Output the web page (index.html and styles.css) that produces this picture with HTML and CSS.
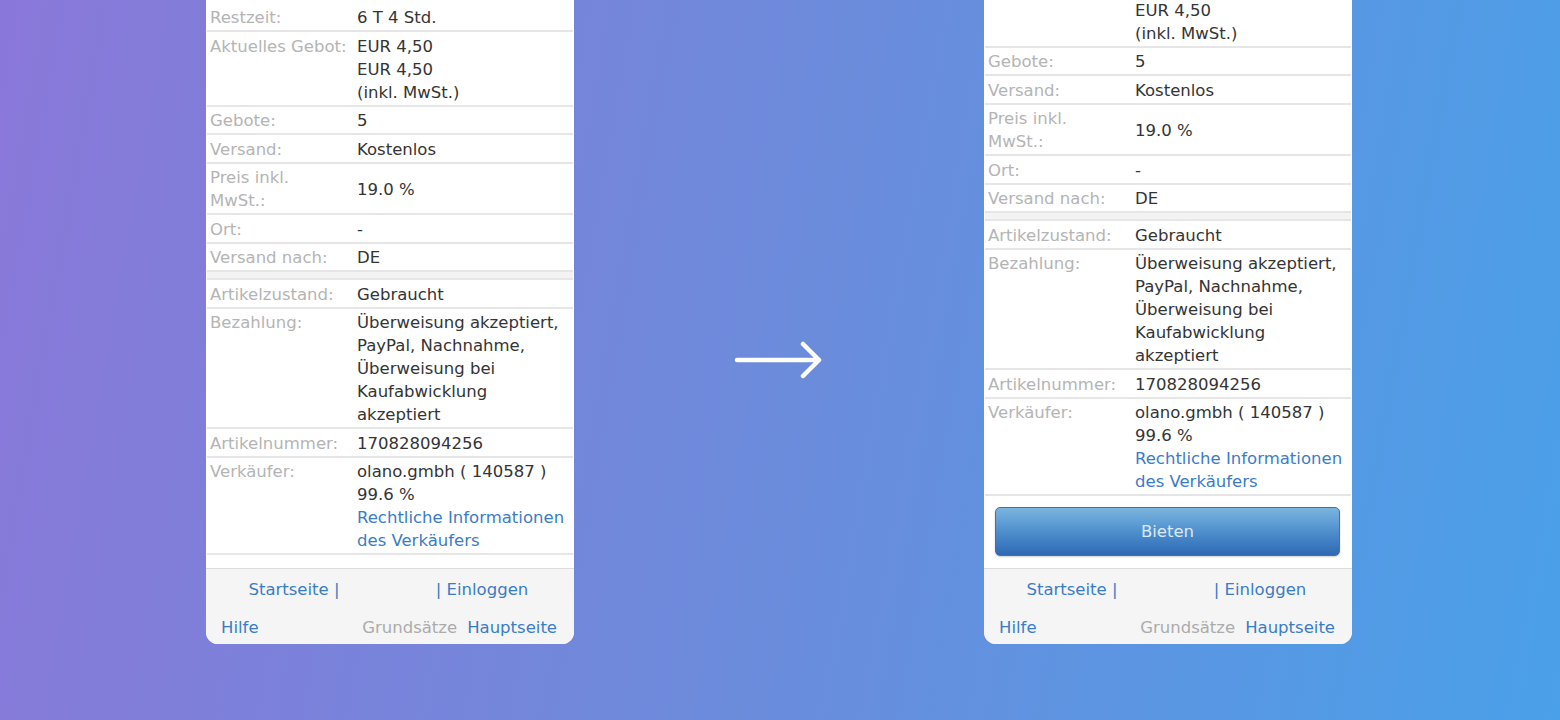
FILE: index.html
```html
<!DOCTYPE html>
<html>
<head>
    <title>Artikel - Vorher / Nachher</title>
    <link rel="stylesheet" href="styles.css">
</head>
<body>
    <div class="stage">
        <div class="phone">
            <div class="details">
                <div class="row"><span class="label">Restzeit:</span><span class="value">6 T 4 Std.</span></div>
                <div class="row"><span class="label">Aktuelles Gebot:</span><span class="value">EUR 4,50<br />EUR 4,50<br />(inkl. MwSt.)</span></div>
                <div class="row"><span class="label">Gebote:</span><span class="value">5</span></div>
                <div class="row"><span class="label">Versand:</span><span class="value">Kostenlos</span></div>
                <div class="row"><span class="label">Preis inkl.<br />MwSt.:</span><span class="value">19.0 %</span></div>
                <div class="row"><span class="label">Ort:</span><span class="value">-</span></div>
                <div class="row"><span class="label">Versand nach:</span><span class="value">DE</span></div>
                <div class="sep"></div>
                <div class="row"><span class="label">Artikelzustand:</span><span class="value">Gebraucht</span></div>
                <div class="row"><span class="label">Bezahlung:</span><span class="value">Überweisung akzeptiert,<br />PayPal, Nachnahme,<br />Überweisung bei<br />Kaufabwicklung<br />akzeptiert</span></div>
                <div class="row"><span class="label">Artikelnummer:</span><span class="value">170828094256</span></div>
                <div class="row"><span class="label">Verkäufer:</span><span class="value">olano.gmbh ( 140587 )<br />99.6 %<br /><a href="#" class="link">Rechtliche Informationen<br />des Verkäufers</a></span></div>
            </div>
            <div class="actions"></div>
            <div class="foot">
                <div class="foot-top">
                    <a href="#">Startseite |</a>
                    <a href="#">| Einloggen</a>
                </div>
                <div class="foot-bottom">
                    <a href="#">Hilfe</a>
                    <span class="foot-right"><span class="muted">Grundsätze</span><a href="#">Hauptseite</a></span>
                </div>
            </div>
        </div>

        <svg class="arrow" width="90" height="40" viewBox="0 0 90 40">
            <path d="M3 20 H85 M69 4 L85 20 L69 36" fill="none" stroke="#ffffff" stroke-width="4.5" stroke-linecap="round" stroke-linejoin="round" />
        </svg>

        <div class="phone">
            <div class="details">
                <div class="row"><span class="label">Restzeit:</span><span class="value">6 T 4 Std.</span></div>
                <div class="row"><span class="label">Aktuelles Gebot:</span><span class="value">EUR 4,50<br />EUR 4,50<br />(inkl. MwSt.)</span></div>
                <div class="row"><span class="label">Gebote:</span><span class="value">5</span></div>
                <div class="row"><span class="label">Versand:</span><span class="value">Kostenlos</span></div>
                <div class="row"><span class="label">Preis inkl.<br />MwSt.:</span><span class="value">19.0 %</span></div>
                <div class="row"><span class="label">Ort:</span><span class="value">-</span></div>
                <div class="row"><span class="label">Versand nach:</span><span class="value">DE</span></div>
                <div class="sep"></div>
                <div class="row"><span class="label">Artikelzustand:</span><span class="value">Gebraucht</span></div>
                <div class="row"><span class="label">Bezahlung:</span><span class="value">Überweisung akzeptiert,<br />PayPal, Nachnahme,<br />Überweisung bei<br />Kaufabwicklung<br />akzeptiert</span></div>
                <div class="row"><span class="label">Artikelnummer:</span><span class="value">170828094256</span></div>
                <div class="row"><span class="label">Verkäufer:</span><span class="value">olano.gmbh ( 140587 )<br />99.6 %<br /><a href="#" class="link">Rechtliche Informationen<br />des Verkäufers</a></span></div>
            </div>
            <div class="actions actions-bid">
                <button type="button" class="bid">Bieten</button>
            </div>
            <div class="foot">
                <div class="foot-top">
                    <a href="#">Startseite |</a>
                    <a href="#">| Einloggen</a>
                </div>
                <div class="foot-bottom">
                    <a href="#">Hilfe</a>
                    <span class="foot-right"><span class="muted">Grundsätze</span><a href="#">Hauptseite</a></span>
                </div>
            </div>
        </div>
    </div>
</body>
</html>
```

FILE: styles.css
```css
body {
    margin: 0;
    padding: 0;
    height: 720px;
    overflow: hidden;
    font-family: "DejaVu Sans", Verdana, sans-serif;
    background: linear-gradient(100deg, #8a78d9 0%, #6c8bdb 50%, #4aa0e9 100%);
}

.stage {
    display: flex;
    justify-content: space-between;
    height: 720px;
    padding: 0 208px 0 206px;
}

.phone {
    width: 368px;
    height: 644px;
    display: flex;
    flex-direction: column;
    justify-content: flex-end;
    overflow: hidden;
    background-color: #ffffff;
    border-radius: 0 0 12px 12px;
    font-size: 16.5px;
    line-height: 23px;
}

.details {
    margin: 0 1px;
}

.row {
    display: flex;
    padding: 2.5px 0 1px;
    border-bottom: 2px solid #e6e6e6;
}

.label {
    width: 147px;
    padding-left: 3px;
    flex-shrink: 0;
    align-self: flex-start;
    color: #b4b4b4;
}

.value {
    align-self: center;
    color: #343434;
}

.link {
    color: #3b7cc7;
    text-decoration: none;
}

.sep {
    height: 6px;
    background-color: #f3f3f3;
    border-bottom: 2px solid #e6e6e6;
}

.actions {
    height: 13px;
}

.actions-bid {
    height: auto;
    padding: 11px 12px 12px 11px;
}

.bid {
    display: block;
    width: 100%;
    height: 49px;
    border: 1px solid #3a72b5;
    border-radius: 5px;
    background: linear-gradient(#7bb5df, #4e8fcd 50%, #2f69b4);
    box-shadow: 0 1px 2px rgba(0, 0, 0, 0.2);
    color: #dde9f5;
    font-family: "DejaVu Sans", Verdana, sans-serif;
    font-size: 16.5px;
}

.foot {
    height: 76px;
    box-sizing: border-box;
    padding: 9px 0 6px;
    border-top: 1px solid #dcdcdc;
    background-color: #f5f5f5;
}

.foot a {
    color: #3b7cc7;
    text-decoration: none;
}

.foot-top {
    display: grid;
    grid-template-columns: 1fr 1fr;
    text-align: center;
}

.foot-top a:first-child {
    margin-right: 8px;
}

.foot-bottom {
    display: flex;
    justify-content: space-between;
    margin-top: 15px;
    padding: 0 17px 0 15px;
}

.foot-right {
    display: flex;
    gap: 10px;
}

.muted {
    color: #ababab;
}

.arrow {
    align-self: center;
}
```
